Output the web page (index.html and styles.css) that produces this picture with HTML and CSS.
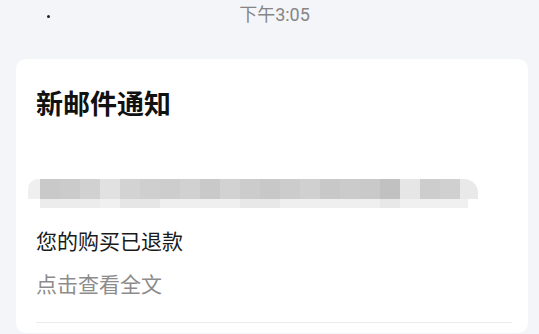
FILE: index.html
```html
<!DOCTYPE html>
<html lang="zh">
<head>
<meta charset="utf-8">
<link rel="stylesheet" href="styles.css">
</head>
<body>
<div class="status">
  <span class="dot"></span>
  <span class="time">下午3:05</span>
</div>
<div class="card">
  <h1 class="title">新邮件通知</h1>
  <div class="mosaic" aria-hidden="true"></div>
  <p class="line">您的购买已退款</p>
  <p class="line more">点击查看全文</p>
  <div class="divider"></div>
</div>
</body>
</html>
```
FILE: styles.css
```css
html, body {
  margin: 0;
  padding: 0;
}
body {
  background: #f4f5f9;
  font-family: "Noto Sans CJK SC", "Noto Sans", sans-serif;
  width: 539px;
  height: 334px;
  overflow: hidden;
}
.status {
  position: relative;
  height: 30px;
  display: flex;
  justify-content: center;
  align-items: center;
  padding-left: 10px;
}
.dot {
  position: absolute;
  left: 47px;
  top: 15px;
  width: 3px;
  height: 3px;
  background: #222;
  border-radius: 50%;
}
.time {
  font-family: Roboto, "Noto Sans CJK SC", sans-serif;
  font-size: 18px;
  color: #858585;
  line-height: 20px;
  margin-top: 0;
}
.card {
  margin: 29px 11px 0 16px;
  background: #ffffff;
  border-radius: 10px;
  padding: 30px 16px 10px 20px;
  display: flex;
  flex-direction: column;
}
.title {
  margin: 0;
  font-size: 27px;
  line-height: 27px;
  font-weight: 700;
  color: #111;
}
.mosaic {
  margin: 63px 0 0 -8px;
  width: 450px;
  height: 29px;
  border-radius: 10px 14px 4px 10px;
  background:
    linear-gradient(to right,
      #efefef 0 12px,
      #c9c9c9 12px 32px,
      #cbcbcb 32px 52px,
      #d1d1d1 52px 72px,
      #e1e1e1 72px 92px,
      #d3d3d3 92px 112px,
      #cfcfcf 112px 132px,
      #cdcdcd 132px 152px,
      #d1d1d1 152px 172px,
      #c9c9c9 172px 192px,
      #d2d2d2 192px 212px,
      #cccccc 212px 232px,
      #c8c8c8 232px 252px,
      #cccccc 252px 272px,
      #d0d0d0 272px 292px,
      #c8c8c8 292px 312px,
      #cbcbcb 312px 332px,
      #c9c9c9 332px 352px,
      #c1c1c1 352px 372px,
      #e6e6e6 372px 392px,
      #cdcdcd 392px 412px,
      #d0d0d0 412px 432px,
      #e9e9e9 432px 450px) top left / 450px 20px no-repeat,
    linear-gradient(to right,
      #ffffff 0 12px,
      #ececec 12px 72px,
      #f0f0f0 72px 92px,
      #e6e6e6 92px 132px,
      #efefef 132px 212px,
      #e8e8e8 212px 252px,
      #efefef 252px 352px,
      #e8e8e8 352px 372px,
      #f0f0f0 372px 440px,
      #ffffff 440px 450px) bottom left / 450px 9px no-repeat;
}
.line {
  margin: 22px 0 0;
  font-size: 21px;
  line-height: 21px;
  color: #1a1a1a;
}
.more {
  color: #8c8c8c;
}
.divider {
  margin-top: 28px;
  height: 1px;
  background: #ebebeb;
}
```
